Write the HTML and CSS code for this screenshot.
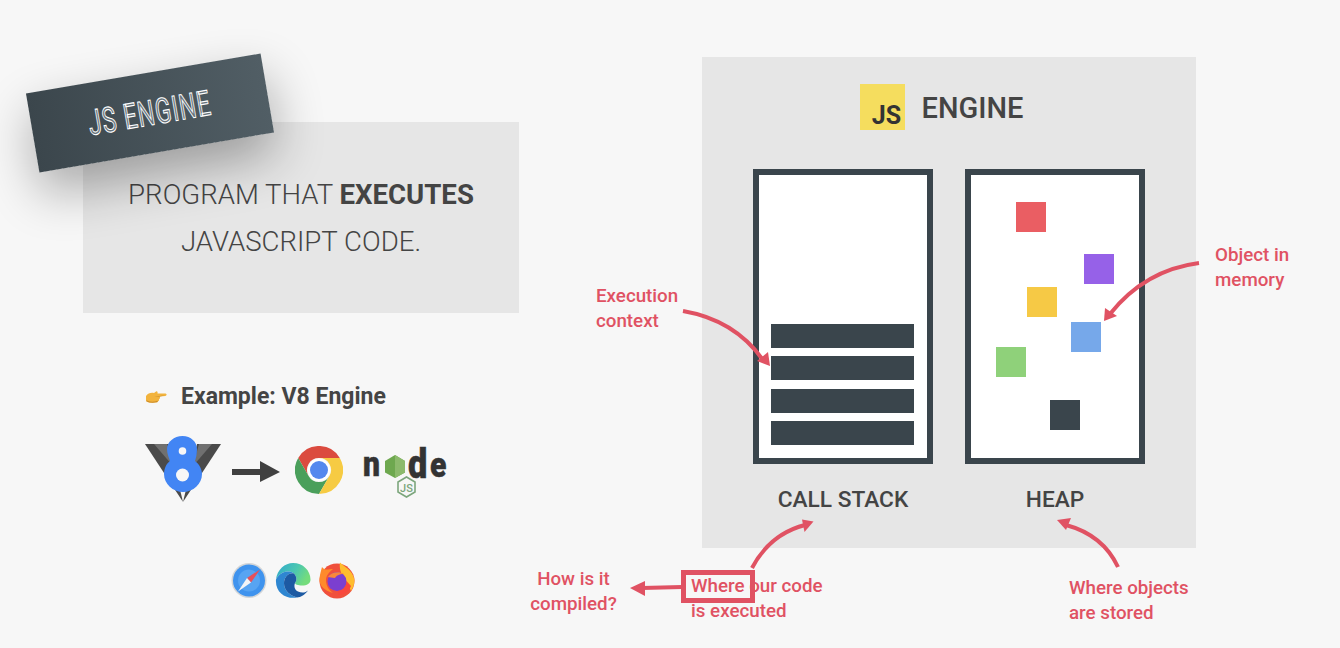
FILE: index.html
```html
<!DOCTYPE html>
<html lang="en">
<head>
<meta charset="utf-8">
<title>JS Engine</title>
<link rel="stylesheet" href="styles.css">
</head>
<body>
<main class="slide">
  <section class="left">
    <div class="definition">
      <p class="definition-line">PROGRAM THAT <strong>EXECUTES</strong></p>
      <p class="definition-line">JAVASCRIPT CODE.</p>
    </div>
    <div class="example">
      <svg class="hand" viewBox="0 0 22 14" aria-hidden="true">
        <path d="M1 6 C3 3 6 2.5 9 3 L11 1.5 C12 1 13 2 12.5 3.5 L20.5 3.6 C22 4 22 5.6 20.5 5.9 L14.5 6.4 C15.5 7.5 15 8.8 14 9 C14.5 10 13.8 11 13 11.2 C12.8 12.2 12 12.6 11 12.5 L6 12.8 C4 13 2.5 12 1 11 Z" fill="#f2b33d"/>
        <path d="M2 10.5 C5 12 9 12 12.5 10.8 L12.8 11.6 C11 12.8 5 13.4 1 11 Z" fill="#c98a2a"/>
        <path d="M9 6.4 L20 5.6 L14.5 6.6 Z" fill="#b97f25"/>
      </svg>
      <h2 class="example-title">Example: V8 Engine</h2>
    </div>
    <div class="logos">
      <svg class="logo-v8" viewBox="0 0 76 66" aria-hidden="true">
        <path d="M0 8 H24 L38 66 Z" fill="#4a4a4a"/>
        <path d="M76 8 H52 L38 66 Z" fill="#4a4a4a"/>
        <path d="M9 8 H22 L28 30 Z" fill="#707070"/>
        <path d="M67 8 H54 L48 30 Z" fill="#707070"/>
        <path d="M37.500 0 C46 0 52 6 52 13 C52 18 51 22 50 25 C54 28 57 33 57 38 C57 48 48 56 38 56 C28 56 19 48 19 38 C19 33 21 28 25 25 C24 22 22 18 22 13 C22 6 29 0 37.500 0 Z" fill="#4285f4"/>
        <circle cx="37.500" cy="15" r="3.800" fill="#f7f7f7"/>
        <circle cx="37.500" cy="39" r="6.500" fill="#f7f7f7"/>
      </svg>
      <svg class="logo-arrow" viewBox="0 0 48 22" aria-hidden="true">
        <path d="M0 8 H28 V0 L48 11 L28 21 V14 H0 Z" fill="#404040"/>
      </svg>
      <svg class="logo-chrome" viewBox="0 0 48 48" aria-hidden="true">
        <path d="M3.2 12 A24 24 0 0 1 44.8 12 L24 12 A12 12 0 0 0 13.6 30 Z" fill="#db4b3f"/>
        <path d="M3.2 12 A24 24 0 0 0 24 48 L34.4 30 A12 12 0 0 1 13.6 30 Z" fill="#4a9f5b"/>
        <path d="M24 48 A24 24 0 0 0 44.8 12 L24 12 A12 12 0 0 1 34.4 30 Z" fill="#f6cb43"/>
        <circle cx="24" cy="24" r="11" fill="#fff"/>
        <circle cx="24" cy="24" r="9" fill="#5488ee"/>
      </svg>
      <svg class="logo-node" viewBox="0 0 86 54" aria-hidden="true">
        <text class="node-letter" transform="translate(0 31) scale(.86 1)">n</text>
        <path d="M32 10 L42 16 V27.500 L32 33 L22 27.500 V16 Z" fill="#6ea84f"/>
        <path d="M32 10 L42 16 V27.500 L32 33 Z" fill="#8cba6c"/>
        <text class="node-letter node-d" transform="translate(45 33) scale(.86 1)">d</text>
        <text class="node-letter" transform="translate(67 31.500) scale(.86 1)">e</text>
        <path d="M43.500 32 L52 37 V47 L43.500 52 L35 47 V37 Z" fill="#f7f7f7" stroke="#7ca67c" stroke-width="1.600"/>
        <text class="node-js" x="43.500" y="46.500">JS</text>
      </svg>
    </div>
    <div class="browsers">
      <svg class="browser" viewBox="0 0 36 36" aria-hidden="true">
        <circle cx="18" cy="18" r="17.500" fill="#d2d5d8"/>
        <circle cx="18" cy="18" r="16" fill="#3f93ee"/>
        <circle cx="18" cy="18" r="11" fill="#57a4f2"/>
        <path d="M29 7 L16 15.500 L20 20 Z" fill="#e8505a"/>
        <path d="M7 29 L16 15.500 L20 20 Z" fill="#f4f5f6"/>
      </svg>
      <svg class="browser" viewBox="0 0 36 36" aria-hidden="true">
        <defs>
          <linearGradient id="edge-top" x1="0" y1="0" x2="1" y2="0.400">
            <stop offset="0" stop-color="#2fa8cf"/>
            <stop offset="0.600" stop-color="#4cc7b0"/>
            <stop offset="1" stop-color="#74dc7c"/>
          </linearGradient>
        </defs>
        <path d="M1 17 C2 7 10 0.500 18 0.500 C28 0.500 35.500 8 35.500 17 C35.500 21 32 23 27 23 C23 23 20 22 20 20.500 C22 18 22 14 19 11 C14 7 5 9 1 17 Z" fill="url(#edge-top)"/>
        <path d="M1 17 C5 9 14 7 19 11 C13 10 9 15 9 21 C9 28 15 33 22 35 C11 37 0 30 1 17 Z" fill="#2e86d1"/>
        <path d="M19 11 C22 14 22 18 20 20.500 C19 23 19 27 23 29 C27 31 31 30 33 28 C30 32 26 35 22 35 C15 33 9 28 9 21 C9 15 13 10 19 11 Z" fill="#1d5aa3"/>
      </svg>
      <svg class="browser" viewBox="0 0 36 37" aria-hidden="true">
        <circle cx="18" cy="19" r="17.500" fill="#f0503c"/>
        <path d="M3 5 C6 9 9 7 14 7 C10 10 7 14 7 18 C7 24 10 28 14 31 C6 29 0.500 24 0.500 18 C0.500 13 2 9 3 5 Z" fill="#ff8a2b"/>
        <path d="M21 0.500 C24 4 34 8 35.500 18 C35.500 22 34 26 32 29 C30 24 28 20 25 16 C22 12 20 6 21 0.500 Z" fill="#ffbd2e"/>
        <circle cx="18" cy="19.500" r="9.500" fill="#7b3fd0"/>
        <path d="M9 15 C12 10 20 9 25 12 C20 12 17 14 16 16 C13 16 11 15 9 15 Z" fill="#f9883a"/>
        <path d="M19 29 C24 28.500 28 24 27.500 19 L32 24 C30 30 25 33 19 33 Z" fill="#f9473c"/>
      </svg>
    </div>
  </section>

  <section class="engine">
    <header class="engine-head">
      <div class="js-logo">JS</div>
      <h1 class="engine-title">ENGINE</h1>
    </header>
    <div class="columns">
      <div class="column">
        <div class="frame frame-stack">
          <div class="bar"></div>
          <div class="bar"></div>
          <div class="bar"></div>
          <div class="bar"></div>
        </div>
        <h3 class="column-label">CALL STACK</h3>
      </div>
      <div class="column">
        <div class="frame frame-heap">
          <span class="obj obj-red"></span>
          <span class="obj obj-purple"></span>
          <span class="obj obj-yellow"></span>
          <span class="obj obj-blue"></span>
          <span class="obj obj-green"></span>
          <span class="obj obj-dark"></span>
        </div>
        <h3 class="column-label">HEAP</h3>
      </div>
    </div>
  </section>

  <div class="banner"><span class="banner-text">JS ENGINE</span></div>

  <p class="note note-context">Execution<br>context</p>
  <p class="note note-memory">Object in<br>memory</p>
  <p class="note note-where">Where our code<br>is executed</p>
  <p class="note note-stored">Where objects<br>are stored</p>
  <p class="note note-compiled">How is it<br>compiled?</p>
  <div class="highlight"></div>

  <svg class="arrows" viewBox="0 0 1340 648" aria-hidden="true">
    <g class="arrow-line">
      <path d="M683 311 Q735 320 763 360"/>
      <path d="M1199 263 Q1145 270 1110 314"/>
      <path d="M752 568 Q770 534 805 525"/>
      <path d="M1118 567 Q1103 535 1066 525"/>
      <path d="M682 587 L642 588"/>
    </g>
    <g class="arrow-head">
      <path d="M770 366 L757 361 L768 352 Z"/>
      <path d="M1104 321 L1105 308 L1117 316 Z"/>
      <path d="M813.500 521.500 L802 519.500 L804.500 532 Z"/>
      <path d="M1057 520 L1071 518 L1066 530 Z"/>
      <path d="M630 588 L645 581 L645 596 Z"/>
    </g>
  </svg>
</main>
</body>
</html>
```

FILE: styles.css
```css
* { box-sizing: border-box; }
html, body { margin: 0; padding: 0; }
body { background: #f7f7f7; font-family: Roboto, "Liberation Sans", sans-serif; color: #444; }
p, h1, h2, h3 { margin: 0; }

.slide { position: relative; display: flex; width: 1340px; height: 648px; overflow: hidden; background: #f7f7f7; }

.left { width: 702px; padding: 122px 0 0 83px; }

.definition { display: flex; flex-direction: column; justify-content: center; align-items: center; width: 436px; height: 191px; padding-top: 1px; background: #e6e6e6; }
.definition-line { font-size: 27.600px; font-weight: 300; line-height: 47px; }
.definition-line strong { font-weight: 700; }

.example { display: flex; align-items: center; gap: 14px; margin: 69px 0 0 62px; }
.hand { width: 22px; height: 14px; }
.example-title { font-size: 23px; font-weight: 700; line-height: 30px; }

.logos { display: flex; align-items: flex-start; margin: 24px 0 0 62px; }
.logo-v8 { width: 76px; height: 66px; }
.logo-arrow { width: 48px; height: 22px; margin: 25px 0 0 11px; }
.logo-chrome { width: 48px; height: 48px; margin: 10px 0 0 15px; }
.logo-node { width: 86px; height: 54px; margin: 9px 0 0 20px; overflow: visible; }
.node-letter { font-family: Roboto, sans-serif; font-size: 35px; font-weight: 900; fill: #333; stroke: #333; stroke-width: .5px; }
.node-d { font-size: 40px; }
.node-js { font-family: Roboto, sans-serif; font-size: 11px; font-weight: 500; fill: #7ca67c; text-anchor: middle; }

.browsers { display: flex; gap: 8px; margin: 60px 0 0 148px; }
.browser { width: 36px; height: 37px; }

.engine { display: flex; flex-direction: column; align-items: center; width: 494px; height: 491px; margin-top: 57px; background: #e6e6e6; }
.engine-head { display: flex; align-items: center; gap: 17px; height: 46px; margin: 27px 0 0 -15px; }
.js-logo { display: flex; align-items: flex-end; justify-content: flex-end; width: 45px; height: 46px; padding: 0 3.500px 0 0; background: #f5dd5e; color: #333; font-size: 25px; font-weight: 700; line-height: 28px; }
.engine-title { padding-top: 2px; font-size: 29px; font-weight: 500; line-height: 46px; color: #444; }

.columns { display: flex; gap: 32px; margin-top: 39px; }
.column { display: flex; flex-direction: column; align-items: center; width: 180px; }
.frame { position: relative; display: flex; flex-direction: column; justify-content: flex-end; gap: 8.330px; width: 180px; height: 295px; padding: 0 13px 13px 12px; border: 6px solid #3a454c; background: #fff; }
.bar { height: 24px; background: #3a454c; }
.column-label { margin-top: 20.500px; font-size: 22.700px; font-weight: 500; line-height: 30px; color: #444; }

.obj { position: absolute; width: 30px; height: 30px; }
.obj-red { left: 45px; top: 27px; background: #ea5e63; }
.obj-purple { left: 113px; top: 79px; background: #9661e8; }
.obj-yellow { left: 56px; top: 112px; background: #f6c945; }
.obj-blue { left: 100px; top: 147px; background: #76a8ea; }
.obj-green { left: 25px; top: 172px; background: #8fd17a; }
.obj-dark { left: 79px; top: 225px; background: #3a454c; }

.banner { position: absolute; left: 31px; top: 72.500px; display: flex; align-items: center; justify-content: center; width: 238px; height: 80px; background: linear-gradient(90deg, #3b464c, #515e65); box-shadow: 0 22px 50px rgba(0, 0, 0, .32); transform: rotate(-9.700deg); }
.banner-text { display: inline-block; font-size: 35px; font-weight: 400; letter-spacing: 1.500px; white-space: nowrap; color: #66727a; -webkit-text-stroke: 1.100px #fff; transform: scaleX(.67); }

.note { position: absolute; font-size: 18.750px; font-weight: 500; line-height: 25px; color: #e05263; }
.note-context { left: 596px; top: 284px; }
.note-memory { left: 1215px; top: 243px; }
.note-where { left: 691px; top: 574px; }
.note-stored { left: 1069px; top: 576px; }
.note-compiled { left: 523px; top: 567px; width: 101px; text-align: center; }

.highlight { position: absolute; left: 681px; top: 570px; width: 74px; height: 33px; border: 5px solid #e05263; }

.arrows { position: absolute; left: 0; top: 0; width: 1340px; height: 648px; pointer-events: none; }
.arrow-line path { fill: none; stroke: #e05263; stroke-width: 4px; }
.arrow-head path { fill: #e05263; }
```
